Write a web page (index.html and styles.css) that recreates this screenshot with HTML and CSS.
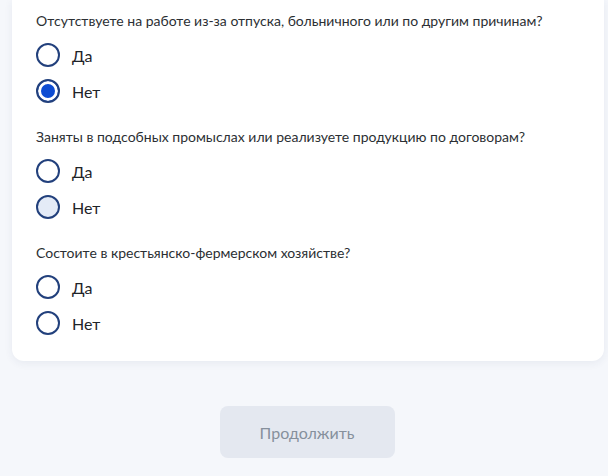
FILE: index.html
```html
<!DOCTYPE html>
<html lang="ru">
<head>
    <meta charset="UTF-8">
    <meta name="viewport" content="width=device-width, initial-scale=1.0">
    <title>Анкета</title>
    <link rel="stylesheet" href="styles.css">
</head>
<body>

<div class="card">
    <div class="question">
        <p class="question-title">Отсутствуете на работе из-за отпуска, больничного или по другим причинам?</p>
        <label class="radio"><span class="radio-mark"></span>Да</label>
        <label class="radio checked"><span class="radio-mark"></span>Нет</label>
    </div>

    <div class="question">
        <p class="question-title">Заняты в подсобных промыслах или реализуете продукцию по договорам?</p>
        <label class="radio"><span class="radio-mark"></span>Да</label>
        <label class="radio hover"><span class="radio-mark"></span>Нет</label>
    </div>

    <div class="question">
        <p class="question-title">Состоите в крестьянско-фермерском хозяйстве?</p>
        <label class="radio"><span class="radio-mark"></span>Да</label>
        <label class="radio"><span class="radio-mark"></span>Нет</label>
    </div>
</div>

<div class="actions">
    <button class="btn" disabled>Продолжить</button>
</div>

</body>
</html>
```

FILE: styles.css
```css
body {
    font-family: Lato, "Open Sans", sans-serif;
    margin: 0;
    background-color: #f5f7fb;
    color: #1f2429;
}
.card {
    background: #fff;
    margin: 0 4px 0 12px;
    padding: 11px 24px 26px;
    border-radius: 0 0 12px 12px;
    box-shadow: 0 2px 8px rgba(40, 60, 100, 0.07);
    display: flex;
    flex-direction: column;
    gap: 24px;
}
.question {
    display: flex;
    flex-direction: column;
    gap: 12px;
}
.question-title {
    margin: 0;
    font-size: 14px;
    line-height: 20px;
    color: #2b2f33;
}
.radio {
    display: flex;
    align-items: center;
    gap: 12px;
    height: 24px;
    font-size: 16px;
    cursor: pointer;
}
.radio-mark {
    box-sizing: border-box;
    width: 24px;
    height: 24px;
    border: 2px solid #22407c;
    border-radius: 50%;
    background: #fff;
}
.radio.checked .radio-mark {
    background: #0d4cd3;
    box-shadow: inset 0 0 0 3px #fff;
}
.radio.hover .radio-mark {
    background: #e4ebf7;
}
.actions {
    display: flex;
    justify-content: center;
    padding: 45px 0 0 6px;
}
.btn {
    width: 175px;
    height: 52px;
    border: none;
    border-radius: 8px;
    background-color: #e4e8f0;
    color: #86909c;
    font-family: Lato, sans-serif;
    font-size: 16px;
}
```
